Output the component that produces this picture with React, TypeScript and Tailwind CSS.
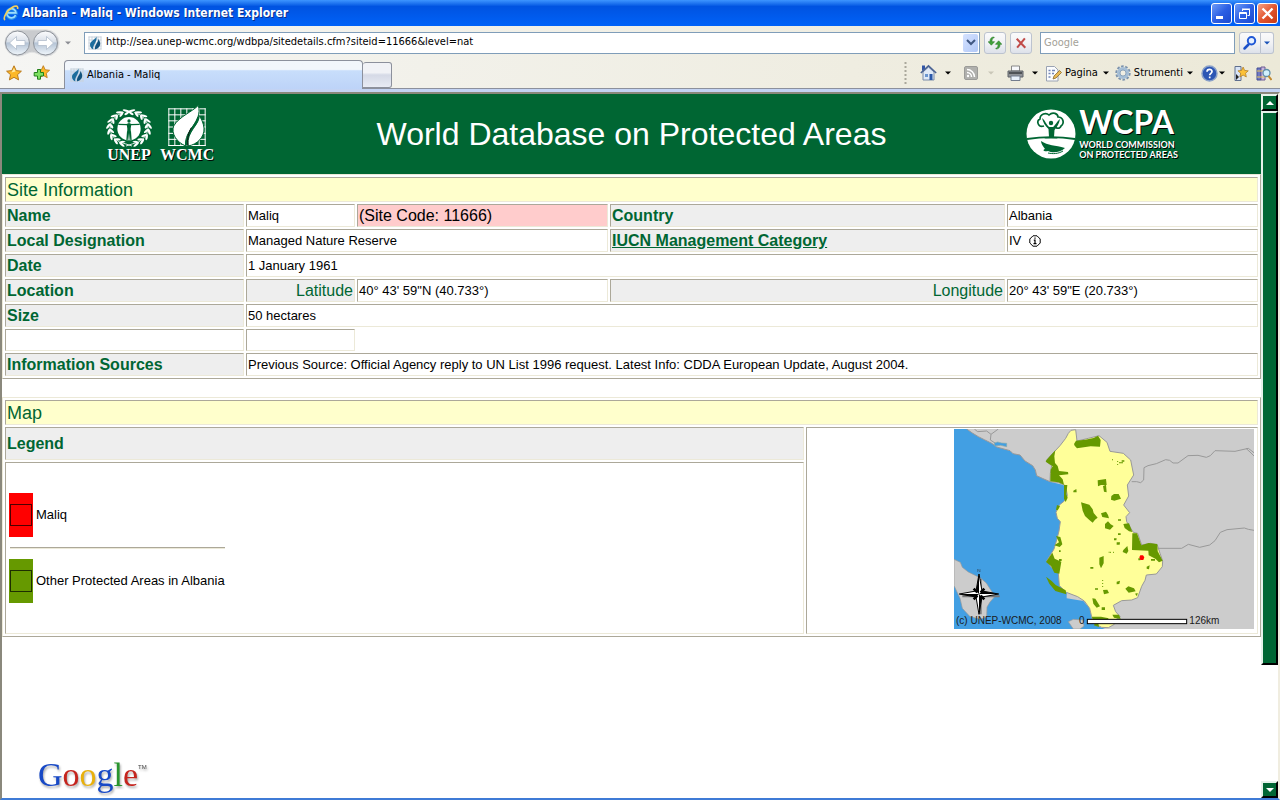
import React from "react";

const ui = "font-['DejaVu_Sans_Condensed','DejaVu_Sans',sans-serif] text-[11px]";

function Caret({ className = "text-black" }: { className?: string }) {
  return (
    <svg width="6" height="4" viewBox="0 0 6 4" className={`shrink-0 ${className}`} aria-hidden="true">
      <path d="M0 0.5h6L3 3.5z" fill="currentColor" />
    </svg>
  );
}

function ExplorerIcon() {
  return (
    <svg width="16" height="16" viewBox="0 0 16 16" aria-hidden="true">
      <path d="M13 10.400A4.800 4.800 0 1 1 13.300 7.900H5" fill="none" stroke="#2a8ee6" strokeWidth="3.200" />
      <path d="M12.600 10.200A4.600 4.600 0 1 1 13 7.900H5" fill="none" stroke="#9bdcfd" strokeWidth="1.600" />
      <path d="M2 15C-.4 13 4 5.500 9 2.500c3.500-2 6.500-2 5.500 1.500" fill="none" stroke="#f3cf5b" strokeWidth="1.700" />
    </svg>
  );
}

function FlameIcon() {
  return (
    <svg width="14" height="14" viewBox="0 0 14 14" className="shrink-0" aria-hidden="true">
      <path d="M1 .5v13M4 .5v13M7 .5v13M10 .5v13M13 .5v13M.5 1h13M.5 4h13M.5 7h13M.5 10h13M.5 13h13" stroke="#c9d3dc" strokeWidth="1" />
      <path d="M8.500 .3C8.500 3 1.800 5 2 9c.1 2 1.500 3.800 3.300 4.400C4.600 8.500 9.500 6.500 8.500 .3z" fill="#1d6d9d" />
      <path d="M10.300 3c.3 3.500-3.600 5-3.400 10.400C10 12.800 12.400 10.500 12.200 7.500c-.1-1.700-.9-3.200-1.900-4.500z" fill="#12537f" />
    </svg>
  );
}

function NavButtons() {
  return (
    <div className="relative flex h-7 w-14 shrink-0 items-center">
      <svg width="56" height="28" viewBox="0 0 56 28" className="absolute inset-0" aria-hidden="true">
        <defs>
          <linearGradient id="orb" x1="0" y1="0" x2="0" y2="1">
            <stop offset="0" stopColor="#fdfdfe" />
            <stop offset=".45" stopColor="#d8dfe8" />
            <stop offset=".5" stopColor="#b4c3d5" />
            <stop offset="1" stopColor="#f1f7fc" />
          </linearGradient>
        </defs>
        <path d="M14 .8h28a13 13 0 0 1 0 26.400c-6 0-9-4-14-4s-8 4-14 4A13 13 0 0 1 14 .8z" fill="#c9cbce" stroke="#e2e3e4" />
        <circle cx="13.500" cy="14" r="12" fill="url(#orb)" stroke="#8d9299" />
        <circle cx="41.500" cy="14" r="12" fill="url(#orb)" stroke="#8d9299" />
        <path d="M5.500 14l7-6.500v4h8.500v5h-8.500v4z" fill="#fff" stroke="#b1bccb" strokeWidth=".8" />
        <path d="M49.500 14l-7-6.500v4H34v5h8.500v4z" fill="#fff" stroke="#b1bccb" strokeWidth=".8" />
      </svg>
      <button aria-label="Back" className="relative h-7 w-7 rounded-full" />
      <button aria-label="Forward" className="relative h-7 w-7 rounded-full" />
    </div>
  );
}

const star = "M8 .8l2.200 4.800 5.200.6-3.900 3.500 1.100 5.200L8 12.300 3.400 14.900l1.100-5.200L.6 6.200l5.200-.6z";

function TitleBar() {
  return (
    <header className="flex h-[26px] items-center bg-linear-to-b from-[#3d95ff] via-[#0053e1] via-25% to-[#0062f8] pr-[2px] pl-[3px]">
      <ExplorerIcon />
      <h1 className="ml-[3px] flex-1 font-['DejaVu_Sans_Condensed','DejaVu_Sans',sans-serif] text-[12px] leading-4 font-bold text-white [text-shadow:1px_1px_0_#0a2f8c]">
        Albania - Maliq - Windows Internet Explorer
      </h1>
      <div className="flex gap-[2px]">
        <button aria-label="Minimize" className="flex h-[21px] w-[21px] items-center justify-center rounded-[3px] border border-white bg-linear-to-br from-[#6f9bf7] via-[#2c5fe4] to-[#1c49cf]">
          <svg width="15" height="15" viewBox="0 0 15 15"><path d="M2 10h7v3H2z" fill="#fff" /></svg>
        </button>
        <button aria-label="Restore" className="flex h-[21px] w-[21px] items-center justify-center rounded-[3px] border border-white bg-linear-to-br from-[#6f9bf7] via-[#2c5fe4] to-[#1c49cf]">
          <svg width="15" height="15" viewBox="0 0 15 15" fill="none" stroke="#fff"><path d="M5.500 5V3.500h7v6H10.500M5 3h8M2.500 6.500h7v6h-7zM2 7.500h8" /></svg>
        </button>
        <button aria-label="Close" className="flex h-[21px] w-[21px] items-center justify-center rounded-[3px] border border-white bg-linear-to-br from-[#f2a084] via-[#e3562f] to-[#c73a12]">
          <svg width="15" height="15" viewBox="0 0 15 15"><path d="M2.500 2.500l10 10M12.500 2.500l-10 10" stroke="#fff" strokeWidth="2.300" /></svg>
        </button>
      </div>
    </header>
  );
}

const softButton = "flex h-[22px] items-center justify-center rounded-[3px] border border-[#bcc3cf] bg-linear-to-b from-[#fafafb] via-[#f1f2f5] to-[#dde1ea]";

function AddressRow() {
  return (
    <div className="flex h-8 items-center pt-px pr-[6px] pl-1">
      <NavButtons />
      <button aria-label="Recent pages" className="mr-3 ml-1 flex h-5 w-2 items-center justify-center">
        <Caret className="text-[#8b8d93]" />
      </button>
      <div className="flex h-[22px] flex-1 items-center border border-[#7f9db9] bg-white pl-[3px]">
        <FlameIcon />
        <input aria-label="Address" readOnly className={`${ui} ml-1 min-w-0 flex-1 bg-transparent text-black outline-none`} value="http://sea.unep-wcmc.org/wdbpa/sitedetails.cfm?siteid=11666&level=nat" />
        <button aria-label="Show addresses" className="mr-px flex h-[18px] w-[15px] items-center justify-center rounded-[2px] bg-linear-to-br from-[#d5e2ff] to-[#b1c8f7]">
          <svg width="10" height="7" viewBox="0 0 10 7"><path d="M1 1l4 4 4-4" fill="none" stroke="#3f5782" strokeWidth="2" /></svg>
        </button>
      </div>
      <button aria-label="Refresh" className={`${softButton} ml-1 w-[22px]`}>
        <svg width="14" height="14" viewBox="0 0 16 16" className="shrink-0">
          <path d="M7 2C5 2 4.500 4 4.500 6.500H7.500L3.800 10.500.2 6.500h2C2.200 3 4 1 7 1.200z" fill="#41a33b" stroke="#2e7d2a" strokeWidth=".7" />
          <path d="M9 14c2 0 2.500-2 2.500-4.500H8.500l3.700-4 3.600 4h-2c0 3.500-1.800 5.500-4.800 5.300z" fill="#41a33b" stroke="#2e7d2a" strokeWidth=".7" />
        </svg>
      </button>
      <button aria-label="Stop" className={`${softButton} mr-2 ml-1 w-[22px]`}>
        <svg width="12" height="12" viewBox="0 0 14 14"><path d="M2 2l10 10.500M11.500 1.500L2.500 12.500" stroke="#c14b49" strokeWidth="2.400" /></svg>
      </button>
      <input aria-label="Search" placeholder="Google" className={`${ui} h-[22px] w-[195px] border border-[#7f9db9] bg-white px-[3px] outline-none placeholder:text-[#a3a198]`} />
      <button aria-label="Run search" className={`${softButton} ml-1 w-[22px] rounded-r-none`}>
        <svg width="16" height="16" viewBox="0 0 16 16" fill="none"><path d="M6.500 9.500L2.500 13.500" stroke="#1c50c8" strokeWidth="2.500" strokeLinecap="round" /><circle cx="9.500" cy="5.800" r="3.700" stroke="#2058d6" strokeWidth="2" fill="#e6f0ff" /></svg>
      </button>
      <button aria-label="Search options" className={`${softButton} w-[13px] rounded-l-none border-l-0`}>
        <Caret className="text-[#1a52b8]" />
      </button>
    </div>
  );
}

function TabRow() {
  return (
    <div className="flex h-[31px] border-b border-[#8c909c]">
      <div className="flex w-16 items-center gap-[11px] pl-[6px]">
        <button aria-label="Favorites">
          <svg width="16" height="16" viewBox="0 0 16 16"><path d={star} fill="#fdb827" stroke="#b9791c" /><path d="M8 3l1.500 3.500-4 1z" fill="#ffe9a0" /></svg>
        </button>
        <button aria-label="Add to favorites">
          <svg width="18" height="16" viewBox="0 0 18 16"><g transform="translate(3.500 0) scale(.85)"><path d={star} fill="#fdb827" stroke="#b9791c" /></g><path d="M4.500 4.500h3v3h3v3.500h-3v3.200h-3V11H1.200V7.500h3.300z" fill="#7ee060" stroke="#23801b" /></svg>
        </button>
      </div>
      <div role="tab" className="mt-[2px] -mb-px flex w-[299px] items-center rounded-t-[4px] border border-b-0 border-[#8c909c] bg-linear-to-b from-[#f2f6fb] from-30% via-[#c8defb] via-35% to-[#bdd3f8] pl-[5px]">
        <FlameIcon />
        <span className={`${ui} ml-[3px]`}>Albania - Maliq</span>
      </div>
      <button aria-label="New tab" className="mt-1 h-[26px] w-[29px] rounded-t-[3px] rounded-br-[3px] border border-l-0 border-[#8c909c] bg-linear-to-b from-[#f1f2f6] from-40% via-[#d5d9e6] to-[#e8ebf4]" />
      <div className={`${ui} ml-auto flex items-center pr-2 text-black`}>
        <svg width="3" height="24" viewBox="0 0 3 24" className="mr-[13px]"><path d="M1.500 1v22" stroke="#aaa89b" strokeWidth="2" strokeDasharray="2 2" /></svg>
        <button aria-label="Home" className="flex items-center gap-2">
          <svg width="17" height="18" viewBox="0 0 17 18"><path d="M2 1.500h3V5L2 7z" fill="#3155a6" /><path d="M3 8l5.500-5L14 8v8H3z" fill="#dfe9f7" stroke="#7b8ba8" /><path d="M.8 9L8.500 1.800 16.200 9" fill="none" stroke="#4b6394" strokeWidth="1.600" /><path d="M9.500 10h3v6h-3z" fill="#2b58a8" /><path d="M5 10h3v3H5z" fill="#6b95cf" /></svg>
          <Caret />
        </button>
        <button aria-label="Feeds" className="ml-[13px] flex items-center gap-[10px]">
          <svg width="14" height="14" viewBox="0 0 14 14"><rect x=".5" y=".5" width="13" height="13" rx="1.500" fill="#b0b0ad" stroke="#9b9b98" /><g fill="none" stroke="#fff" strokeWidth="1.500"><path d="M3 6.500A4.500 4.500 0 0 1 7.500 11M3 3.500A7.500 7.500 0 0 1 10.500 11" /></g><circle cx="4" cy="10" r="1.200" fill="#fff" /></svg>
          <Caret className="text-[#c9c6b8]" />
        </button>
        <button aria-label="Print" className="ml-[13px] flex items-center gap-2">
          <svg width="17" height="16" viewBox="0 0 17 16"><path d="M4.500 1h8v5h-8z" fill="#f7f8fb" stroke="#888" /><path d="M1 6h15v6H1z" fill="#8f9297" stroke="#5f6268" /><path d="M2 7h13v2H2z" fill="#4f5257" /><path d="M4 11h9v4.500H4z" fill="#e8f0fb" stroke="#737d8d" /></svg>
          <Caret />
        </button>
        <button className="ml-[7px] flex items-center">
          <svg width="17" height="17" viewBox="0 0 17 17"><path d="M1.500 1.500h8L13 5v11H1.500z" fill="#fbfcfe" stroke="#9aa3b3" /><path d="M3.500 5.500h2M7 5.500h3M3.500 8.500h2M7 8.500h2M3.500 12h2" stroke="#7386b8" strokeWidth="1.300" /><path d="M8 14l1-3 5.500-5.500 2 2L11 13z" fill="#e9b955" stroke="#8a6b2f" strokeWidth=".8" /></svg>
          <span className="mr-[5px] ml-[3px]">Pagina</span>
          <Caret />
        </button>
        <button className="ml-[6px] flex items-center">
          <svg width="16" height="16" viewBox="0 0 16 16"><circle cx="8" cy="8" r="6.700" fill="none" stroke="#7c93ad" strokeWidth="2" strokeDasharray="2.600 1.600" /><circle cx="8" cy="8" r="4.500" fill="#f0eee3" stroke="#a5bed6" strokeWidth="3" /><circle cx="8" cy="8" r="3" fill="none" stroke="#7d98b4" strokeWidth=".8" /></svg>
          <span className="mr-1 ml-[3px]">Strumenti</span>
          <Caret />
        </button>
        <button aria-label="Help" className="ml-2 flex items-center gap-px">
          <svg width="17" height="17" viewBox="0 0 17 17"><circle cx="8.500" cy="8.500" r="7.500" fill="#2c56b4" stroke="#8aa0c8" strokeWidth="1.500" /><path d="M6 6.800c0-3.300 5-3.200 5-.3 0 1.800-2.300 1.800-2.300 3.800M8.700 11.500v1.800" fill="none" stroke="#fff" strokeWidth="1.700" /></svg>
          <Caret />
        </button>
        <button aria-label="Bookmark page" className="ml-2">
          <svg width="16" height="17" viewBox="0 0 16 17"><path d="M2 1.500h6v14H2z" fill="#d9e4f5" stroke="#5f6f8e" /><path d="M3 9l3 3-3 3z" fill="#222" /><g transform="translate(4.500 1.500) scale(.7)"><path d={star} fill="#fcc136" stroke="#ad771c" /></g></svg>
        </button>
        <button aria-label="Research" className="ml-[7px]">
          <svg width="16" height="17" viewBox="0 0 16 17"><path d="M1 3h4v12H1z" fill="#6f78c4" stroke="#454f94" /><path d="M5 2h4v13H5z" fill="#c9b7e0" stroke="#6c5c93" /><path d="M1 6h8M1 12h8" stroke="#e8c95b" /><circle cx="10.500" cy="8" r="3.500" fill="#d2f0fb" stroke="#5f8ea9" strokeWidth="1.300" /><path d="M12.500 11l3 4" stroke="#c28a2e" strokeWidth="2" /></svg>
        </button>
      </div>
    </div>
  );
}

function Branch() {
  return (
    <>
      <path d="M-14-50A52 52 0 0 0-10 51L8 58" fill="none" stroke="#fff" strokeWidth="2.500" />
      {[-10, -29, -48, -67, -86, -105, -124, -143, -162].map((angle) => (
        <g key={angle} transform={`rotate(${angle}) translate(0 -52)`} fill="#fff">
          <ellipse cx="0" cy="-5" rx="10" ry="3.400" transform="rotate(28)" />
          <ellipse cx="0" cy="5" rx="8" ry="3.200" transform="rotate(-28)" />
        </g>
      ))}
    </>
  );
}

function UnepEmblem() {
  return (
    <svg width="46" height="39" viewBox="18 22 138 117" aria-label="UNEP emblem">
      <g transform="translate(87 82) scale(1.100 .93)"><Branch /></g>
      <g transform="translate(87 82) scale(-1.100 .93)"><Branch /></g>
      <circle cx="87" cy="84" r="40" fill="#063" />
      <circle cx="87" cy="84" r="35" fill="#fff" />
      <path d="M55 71l25 1 7-3 7 3 25-1M83 92l-2 26M91 92l2 26" fill="none" stroke="#063" strokeWidth="4" />
      <path d="M80 70h14l-2 14 1 20-3 14h-1l-2-22-2 22h-1l-3-14 1-20z" fill="#063" />
      <circle cx="87" cy="61" r="5" fill="#063" />
    </svg>
  );
}

function WcmcEmblem() {
  return (
    <svg width="41" height="42" viewBox="203 16 123 126" aria-label="WCMC emblem">
      <path d="M208.500 26v113M226.500 26v113M244.500 26v113M262.500 26v113M280.500 26v113M299.500 26v113M317.500 26v113M207 27.500h112M207 45.500h112M207 63.500h112M207 82h112M207 101h112M207 119h112M207 137.500h112" stroke="#fff" strokeWidth="3" />
      <path d="M297 17c-16 18-58 34-74 62-8 22 8 48 36 60-6-50 52-70 38-122z" fill="#fff" stroke="#063" strokeWidth="3" />
      <path d="M299 47c4 28-38 46-33 92 28-4 50-28 48-54-2-16-8-28-15-38z" fill="#fff" stroke="#063" strokeWidth="3" />
      <path d="M297 52c-6 30-38 44-35 86" fill="none" stroke="#063" strokeWidth="6" />
      <path d="M276 84c-8 14-13 30-10 54" fill="none" stroke="#111" strokeWidth="3" />
    </svg>
  );
}

function WcpaEmblem() {
  return (
    <svg width="50" height="50" viewBox="0 0 50 50" aria-label="WCPA emblem" className="shrink-0">
      <circle cx="25" cy="25" r="24.500" fill="#fff" />
      <path d="M1 30c16-2.500 32-2.500 48 0" fill="none" stroke="#063" strokeWidth="1.800" />
      <path d="M18 17c-6 2-8-5-4-7 0-5 6-7 9-4 4-4 9-1 9 2 5 0 7 6 3 9-1 3-5 3-6 0" fill="none" stroke="#063" strokeWidth="1.700" />
      <path d="M16 9c3 2 5 8 7.500 9h3.500c2-1 4-6 7-8-1 5-3 8-5.500 11L28 28l4 1.500H18l5-1.500-.5-8C19 17 17 13 16 9z" fill="#063" />
      <circle cx="25" cy="14" r="2.200" fill="#063" />
      <path d="M15 32c7 5 14 4 24 7-5 5-13 5-17 3-4 1-6-1-3-2-2-3-4-5-4-8z" fill="#063" />
      <path d="M22 44c5 1 10 1 15-2" stroke="#063" fill="none" />
    </svg>
  );
}

function Banner() {
  const engraved = "font-['Liberation_Serif',serif] text-[16px] leading-4 font-bold [text-shadow:1px_1px_0_#000]";
  const wcpa = "font-['Lato',sans-serif] font-bold [text-shadow:1px_1px_0_#000]";
  return (
    <div className="grid h-20 grid-cols-[1fr_auto_1fr] items-center bg-[#063] px-[83px] text-white">
      <div className="flex items-end gap-2 pl-[21px]">
        <div className="flex flex-col items-center">
          <UnepEmblem />
          <span className={engraved}>UNEP</span>
        </div>
        <div className="flex flex-col items-center">
          <WcmcEmblem />
          <span className={engraved}>WCMC</span>
        </div>
      </div>
      <h2 className="text-[32px] leading-10">World Database on Protected Areas</h2>
      <div className="flex items-center justify-end gap-[3px]">
        <WcpaEmblem />
        <div className="flex flex-col pb-1 whitespace-nowrap">
          <span className={`${wcpa} text-[32px] leading-9`}>WCPA</span>
          <span className={`${wcpa} text-[9px] leading-[10px]`}>WORLD COMMISSION</span>
          <span className={`${wcpa} text-[9px] leading-[10px]`}>ON PROTECTED AREAS</span>
        </div>
      </div>
    </div>
  );
}

const tableBase = "w-full table-fixed border-separate border-spacing-[2px] border border-t-[#ece9d8] border-l-[#ece9d8] border-r-[#aca899] border-b-[#aca899] text-left";
const edge = "border border-t-[#aca899] border-l-[#aca899] border-r-[#ece9d8] border-b-[#ece9d8]";
const cell = `${edge} p-px`;
const value = `${cell} text-[13px] leading-[19px] text-black`;
const label = `${cell} bg-[#eee] text-[16px] leading-[19px] font-bold text-[#063]`;
const sub = `${cell} bg-[#eee] text-right text-[16px] leading-[19px] font-normal text-[#063]`;
const section = `${edge} bg-[#ffc] px-px pt-[2px] text-[18px] leading-[21px] font-normal text-[#063]`;

function SiteTable() {
  return (
    <table className={tableBase}>
      <colgroup>
        <col className="w-[239px]" />
        <col className="w-[109px]" />
        <col className="w-[251px]" />
        <col />
        <col className="w-[251px]" />
      </colgroup>
      <tbody>
        <tr><th colSpan={5} className={section}>Site Information</th></tr>
        <tr>
          <th className={label}>Name</th>
          <td className={value}>Maliq</td>
          <td className={`${cell} bg-[#fcc] text-[16px] leading-[19px] text-black`}>(Site Code: 11666)</td>
          <th className={label}>Country</th>
          <td className={value}>Albania</td>
        </tr>
        <tr>
          <th className={label}>Local Designation</th>
          <td colSpan={2} className={value}>Managed Nature Reserve</td>
          <th className={label}><a href="#iucn" className="underline">IUCN Management Category</a></th>
          <td className={value}>
            <span className="flex items-center gap-2">
              IV
              <svg width="12" height="12" viewBox="0 0 12 12" fill="none" stroke="#000"><path d="M4 .8h4L11.200 4v4L8 11.200H4L.8 8V4z" /><path d="M6 2.500v1.300M4.800 5.200H6v3.300M4.500 8.700h3" strokeWidth="1.200" /></svg>
            </span>
          </td>
        </tr>
        <tr>
          <th className={label}>Date</th>
          <td colSpan={4} className={value}>1 January 1961</td>
        </tr>
        <tr>
          <th className={label}>Location</th>
          <th className={sub}>Latitude</th>
          <td className={value}>40° 43' 59"N (40.733°)</td>
          <th className={sub}>Longitude</th>
          <td className={value}>20° 43' 59"E (20.733°)</td>
        </tr>
        <tr>
          <th className={label}>Size</th>
          <td colSpan={4} className={value}>50 hectares</td>
        </tr>
        <tr className="h-[22px]">
          <td className={cell} />
          <td className={cell} />
        </tr>
        <tr>
          <th className={label}>Information Sources</th>
          <td colSpan={4} className={value}>
            Previous Source: Official Agency reply to UN List 1996 request. Latest Info: CDDA European Update, August 2004.
          </td>
        </tr>
      </tbody>
    </table>
  );
}

function AlbaniaMap() {
  return (
    <svg width="300" height="200" viewBox="27 12 900 600" className="ml-auto block" role="img" aria-label="Protected areas in Albania">
      <rect x="27" y="12" width="900" height="600" fill="#ccc" />
      <path d="M27 12H65L82 24 100 35 118 44 140 55 155 66 195 77 204 86 225 90 240 108 263 122 271 135 275 152 292 160 315 170 355 180 365 190V520L415 528 434 550 440 575 450 600 480 612H27z" fill="#429fe3" />
      <path d="M65 12L82 24 100 35 118 44 140 55 155 66 195 77 204 86 225 90 240 108 263 122 271 135 275 152 292 160 315 170" fill="none" stroke="#999" strokeWidth="3" />
      <path d="M88 12L98 20 125 18 138 28 160 12M138 28L136 45 150 54" fill="none" stroke="#999" strokeWidth="3" />
      <path d="M148 54l10-3 12 3 15 1v10l-18-4-18 2z" fill="#429fe3" stroke="#8aa" strokeWidth="2" />
      <path d="M27 403L46 412 52 427 70 441 105 458 124 474 134 490 150 514 135 531 126 546 125 576 105 583 74 574 52 550 45 520 27 482z" fill="#ccc" stroke="#999" strokeWidth="2" />
      <path d="M370 590l15-7 28 2 4 18-12 9h-20z" fill="#ccc" stroke="#999" strokeWidth="2" />
      <path
        d="M392 14L378 16 370 25 362 40 345 62 330 78 318 90 303 108 320 122 316 145 315 170 340 172 362 182 367 212 358 228 343 240 333 262 337 280 346 290 342 318 335 345 327 372 305 408 320 428 340 445 343 482 364 502 398 515 418 528 434 550 440 575 446 595 470 607 490 608 508 598 511 585 526 576 512 560 505 541 530 527 560 525 578 518 590 484 600 466 604 450 634 447 652 425 653 408 645 385 637 360 617 355 590 360 578 325 565 322 545 290 543 275 554 263 536 240 551 213 547 180 566 150 557 105 535 85 495 79 486 52 462 32 430 40 396 48z"
        fill="#ff9" stroke="#999" strokeWidth="3" strokeLinejoin="round"
      />
      <g fill="none" stroke="#999" strokeWidth="3">
        <path d="M560 170h15l12 3 9-8 1-37 12-6 25-6 28-12 12 2 10 8h15l30-22 30-1 25 6 12-5 14-15 60 2 40-9 18 14" />
        <path d="M638 370h72l20-12 34 9 30-7 16-13 16-25 20-8 52-5 12 4 17 3" />
        <path d="M903 70l12 11 12 12" />
      </g>
      <g fill="#690">
        <path d="M331 76l-26 28-3 6 21 14-6 10-1 35 24 3 17 7-4-16-11-12 28-3-1-7-27-3-4-15-8-9-2-20zM387 57l6-10 28-3 25-5 13-7 8 13-2 20-28-1-41 6-7-8z" />
        <path d="M458 166l25-4 2 18h-17l-9 4zM474 183l9-4 2 23-8-2zM499 213l8-6h14l7 14-20 6-10-3zM385 197l9-5 1 10h-10zM357 180h10l-3 28 4 10-6 13-5-10z" />
        <path d="M408 232l25 7 10 14 3 11 12 14-8 6-7 9-10-8-13-12-7-16zM468 265l15-5 6 10 3 10-20-4zM480 297l9-8 8 9 9 5-11 11-15-4z" />
        <path d="M333 333l13 3 6 22-8 8-16-5 14-9zM322 383l-19 28 15 12 10 20 15 3 6-36-20-9zM303 455l17 13 12 12 30 16 2 12-33-10-18-22z" />
        <path d="M535 297l17-2 10 26-10-2-13-10zM562 325h14l13 36 22-7 26 3 1 22 15 28-11 5-11-11-20-10-1-14-49-2z" />
        <path d="M535 375l12-12 3 15-5 8-12-5zM463 398l13-5v22l-8 15-5-12zM442 520l9 1 14 23-10 4-10-12zM541 491l9-7 17 6 5 9-21 4zM570 506l8-2-2 10zM515 470l10-3-2 10-8 1zM605 425l9-4-2 12-7-2zM474 495l13-1 5 10-15 4zM502 569h20l5 13-20-4zM440 575h28l23 5-8 10-35 4zM450 596l10-2 2 12-16-5z" />
        <path d="M336 240l9 4-7 12-5-2zM507 340h8l-1 6h-7zM515 352h10l-1 7h-9zM519 283h9v4h-9zM519 325h8v5h-8zM436 426h9v5h-9zM450 490h9v4h-9zM342 376h5v5h-5zM342 402h8v6h-8zM470 547h10v8h-10zM501 103h3v3h-3zM522 112h12v3h-12zM530 106h8v4h-8zM618 402h12v5h-12zM580 400h6v6h-6zM491 380h3v3h-3z" />
      </g>
      <path d="M473 465v22M518 108v18M495 382h18" stroke="#690" strokeWidth="3" strokeDasharray="3 6" />
      <path d="M586 391h8l4 6-3 8h-9l-3-8z" fill="#f00" />
      <path d="M107 462v106M52 514h112" stroke="#777" strokeWidth="6" />
      <path d="M102 447l9 51 50 9-50 9-9 52-9-52-50-9 50-9z" fill="#fff" stroke="#000" strokeWidth="3" />
      <path d="M102 447v60l-9-9zM161 507h-59l9-9zM102 568v-61l9 9zM43 507h59l-9 9z" fill="#000" />
      <path d="M86 491l11 11M118 491l-11 11M118 523l-11-11M86 523l11-11" stroke="#000" strokeWidth="8" />
      <path d="M98 441v-9l7 9v-9" fill="none" stroke="#355a78" strokeWidth="2" />
      <rect x="427" y="583" width="298" height="13" fill="#fff" stroke="#000" strokeWidth="3" />
      <g className="font-['Liberation_Sans',sans-serif] text-[30px]" fill="#1a1a1a">
        <text x="33" y="597">(c) UNEP-WCMC, 2008</text>
        <text x="402" y="597">0</text>
        <text x="733" y="597">126km</text>
      </g>
    </svg>
  );
}

function LegendRow({ name, swatch }: { name: string; swatch: string }) {
  return (
    <div className="flex items-center gap-[3px]">
      <span className={`flex h-11 w-6 items-center justify-center ${swatch}`}>
        <span className="h-[22px] w-[22px] border border-black/70" />
      </span>
      <span className="text-[13px] leading-4">{name}</span>
    </div>
  );
}

function MapTable() {
  return (
    <table className={`${tableBase} mt-[18px]`}>
      <colgroup>
        <col />
        <col className="w-[452px]" />
      </colgroup>
      <tbody>
        <tr><th colSpan={2} className={section}>Map</th></tr>
        <tr className="h-[33px]">
          <th className={label}>Legend</th>
          <td rowSpan={2} className={`${edge} py-px pr-[3px] pl-px align-top`}><AlbaniaMap /></td>
        </tr>
        <tr className="h-[172px]">
          <td className={`${edge} py-px pr-px pl-[3px]`}>
            <div className="flex w-fit flex-col gap-[10px]">
              <LegendRow name="Maliq" swatch="bg-[#f00]" />
              <hr className="ml-px border-t border-b border-t-[#aca899] border-b-[#ece9d8]" />
              <LegendRow name="Other Protected Areas in Albania" swatch="bg-[#690]" />
            </div>
          </td>
        </tr>
      </tbody>
    </table>
  );
}

function GoogleMark() {
  return (
    <a href="#google" className="mt-auto flex w-fit items-start pb-[3px] pl-9 font-['Liberation_Serif',serif] text-[34px] leading-10 drop-shadow-[1px_2px_1px_#0005]">
      <span className="text-[#1849c6]">G</span>
      <span className="text-[#c5241d]">o</span>
      <span className="text-[#e8b00c]">o</span>
      <span className="text-[#1849c6]">g</span>
      <span className="text-[#29952e]">l</span>
      <span className="text-[#c5241d]">e</span>
      <span className="font-['Liberation_Sans',sans-serif] text-[6px] leading-6 text-[#444]">TM</span>
    </a>
  );
}

function ScrollBar() {
  const raised = "border-2 border-t-[#e6f2ea] border-l-[#e6f2ea] border-r-black border-b-black bg-[#063]";
  return (
    <div className="flex w-[17px] shrink-0 flex-col bg-white">
      <button aria-label="Scroll up" className={`flex h-[17px] items-center justify-center ${raised}`}>
        <svg width="8" height="4" viewBox="0 0 8 4"><path d="M4 0l4 4H0z" fill="#fff" /></svg>
      </button>
      <div className={`grow-19 basis-0 ${raised}`} />
      <div className="grow-4 basis-0" />
      <button aria-label="Scroll down" className={`flex h-[17px] items-center justify-center ${raised}`}>
        <svg width="8" height="4" viewBox="0 0 8 4"><path d="M4 4l4-4H0z" fill="#fff" /></svg>
      </button>
    </div>
  );
}

export default function App() {
  return (
    <div className="flex min-h-screen flex-col bg-white font-['Liberation_Sans',sans-serif]">
      <TitleBar />
      <div className="bg-linear-to-r from-[#f5f5f3] to-[#ece9d8]">
        <AddressRow />
        <TabRow />
        <div className="h-[3px] bg-[#c3d3f3]" />
      </div>
      <div className="flex flex-1 border-2 border-t-[#8a887c] border-r-[#f0ede0] border-b-[#3f7bd6] border-l-[#8a887c]">
        <main className="flex min-w-0 flex-1 flex-col">
          <Banner />
          <SiteTable />
          <MapTable />
          <GoogleMark />
        </main>
        <ScrollBar />
      </div>
    </div>
  );
}
